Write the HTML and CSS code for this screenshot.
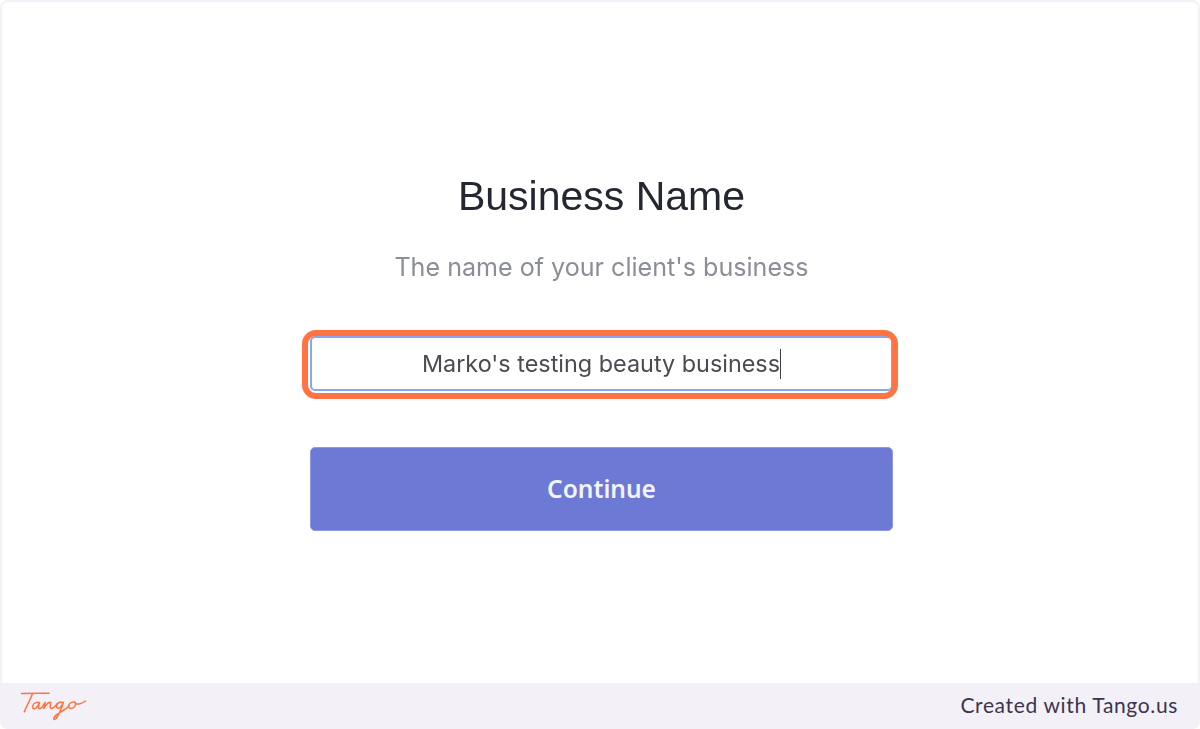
FILE: index.html
```html
<!DOCTYPE html>
<html lang="en">
<head>
<meta charset="utf-8">
<title>Business Name</title>
<link rel="stylesheet" href="styles.css">
</head>
<body>
<div class="frame">
  <main class="stage">
    <div class="form">
      <h1 class="title">Business Name</h1>
      <p class="subtitle">The name of your client's business</p>
      <div class="field">
        <div class="input"><span class="value">Marko's testing beauty business</span><span class="caret"></span></div>
        <div class="highlight"></div>
      </div>
      <button class="continue" type="button">Continue</button>
    </div>
  </main>
  <footer class="footer">
    <svg class="logo" viewBox="0 0 68 32" width="68" height="32" aria-label="Tango" fill="none" stroke="#ff7442" stroke-width="1.5" stroke-linecap="round" stroke-linejoin="round">
      <path d="M1.5 2.5C9 2.3 20 2.3 29 2.2"/>
      <path d="M12.5 2.8C10.5 8 7.5 14 4.5 20C3.8 21.4 4.7 20.6 5 20"/>
      <path d="M19.5 12.5C17.5 10.3 13.5 11.5 12.7 15C12 18 14.5 18.8 16.5 16.5C17.8 15 19 12.8 19.5 11.5C19 13.5 18 16.5 19 17.6C20 18.5 22 16.5 23 14.8C24 13 24.8 11.5 25.2 11.3C25 13.5 23.8 16.5 23.8 17.6C25 15.5 27 12.3 29.5 11.3C31 10.8 30.5 13 30.2 14.5C30 16.5 30.5 18 32.5 17.3C34.5 16.5 35.8 14.5 36.8 13"/>
      <path d="M43 12.5C41.5 10 37.5 11.2 36.7 14.5C36 17.5 38.5 18.2 40.5 16C41.8 14.5 42.8 12.5 43.4 11.2C42.5 15 40 21 37.5 25.5C36 28 34 29.5 33.7 28C33.5 26 38.5 22 43 19.5C45.5 18 47.5 16.5 49 15"/>
      <path d="M54.5 11C51 10.3 48 13.5 48.7 16C49.5 18.5 53.5 17.8 55 15C56 13 55.5 11 54.5 11C54.8 13 57.5 13.5 60 12.8C62 12.2 64 11 65.5 10"/>
    </svg>
    <span class="credit">Created with Tango.us</span>
  </footer>
</div>
</body>
</html>
```
FILE: styles.css
```css
* {
  box-sizing: border-box;
}

html,
body {
  margin: 0;
  height: 100%;
  background: #ffffff;
}

.frame {
  height: 729px;
  display: flex;
  flex-direction: column;
  overflow: hidden;
  border: 2px solid #f3f1f7;
  border-bottom: 0;
  border-radius: 8px;
  background: #f3f1f7;
}

.stage {
  flex: 1;
  display: flex;
  justify-content: center;
  padding: 171px 0 0 3px;
  background: #ffffff;
}

.form {
  width: 583px;
  display: flex;
  flex-direction: column;
  align-items: stretch;
  text-align: center;
}

.title {
  margin: 0;
  font: 400 41px/46px "Liberation Sans", Arial, sans-serif;
  color: #24272f;
  filter: blur(0.3px);
}

.subtitle {
  margin: 31px 0 0;
  font: 400 25.1px/34px "Inter", sans-serif;
  color: #8b8e97;
  filter: blur(0.35px);
}

.field {
  position: relative;
  margin-top: 52px;
}

.input {
  height: 55px;
  display: flex;
  align-items: center;
  justify-content: center;
  border: 2px solid #86a8f0;
  border-radius: 5px;
  background: #ffffff;
  font: 400 23.4px/30px "Inter", sans-serif;
  color: #4a4c52;
}

.value {
  filter: blur(0.35px);
}

.caret {
  width: 1px;
  height: 30px;
  background: #3c3e44;
}

.highlight {
  position: absolute;
  left: -8px;
  right: -5px;
  top: -6px;
  bottom: -8px;
  border: 6px solid #ff7442;
  border-radius: 14px;
  pointer-events: none;
}

.continue {
  height: 84px;
  margin-top: 56px;
  border: 1px solid #8f98e0;
  border-radius: 5px;
  background: #6c79d5;
  color: #f3f4fd;
  font: 600 24.5px/32px "Noto Sans", sans-serif;
}

.footer {
  height: 46px;
  flex: none;
  display: flex;
  align-items: center;
  justify-content: space-between;
  padding: 0 20px 0 18px;
  background: #f3f1f7;
}

.logo {
  display: block;
  margin-top: 2px;
}

.credit {
  font: 400 21px/26px "Lato", sans-serif;
  letter-spacing: 0.65px;
  color: #3c3350;
  margin-top: -2px;
}
```
